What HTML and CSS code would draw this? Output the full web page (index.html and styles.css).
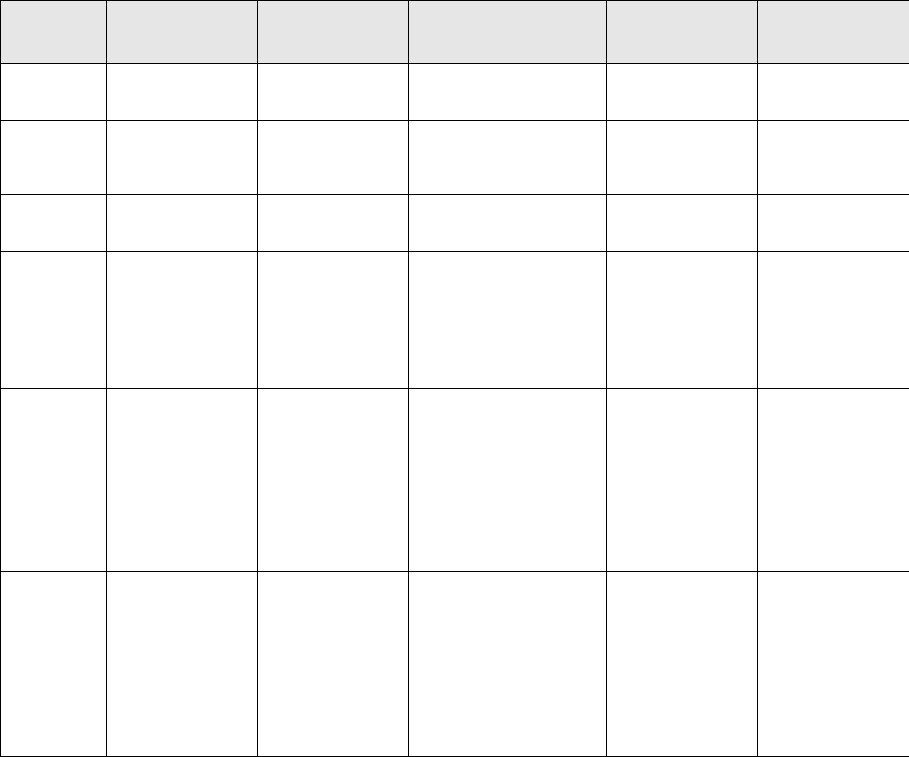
FILE: index.html
```html
<!DOCTYPE html>
<html lang="en">
<head>
<meta charset="utf-8">
<title>Table</title>
<link rel="stylesheet" href="styles.css">
</head>
<body>
<table class="grid">
  <colgroup>
    <col class="c1"><col class="c2"><col class="c3"><col class="c4"><col class="c5"><col class="c6">
  </colgroup>
  <thead>
    <tr class="r0"><th></th><th></th><th></th><th></th><th></th><th></th></tr>
  </thead>
  <tbody>
    <tr class="r1"><td></td><td></td><td></td><td></td><td></td><td></td></tr>
    <tr class="r2"><td></td><td></td><td></td><td></td><td></td><td></td></tr>
    <tr class="r3"><td></td><td></td><td></td><td></td><td></td><td></td></tr>
    <tr class="r4"><td></td><td></td><td></td><td></td><td></td><td></td></tr>
    <tr class="r5"><td></td><td></td><td></td><td></td><td></td><td></td></tr>
    <tr class="r6"><td></td><td></td><td></td><td></td><td></td><td></td></tr>
  </tbody>
</table>
</body>
</html>
```
FILE: styles.css
```css
html, body {
  margin: 0;
  padding: 0;
  background: #ffffff;
  font-family: "Liberation Sans", Arial, sans-serif;
}
.grid {
  border-collapse: collapse;
  table-layout: fixed;
  width: 909px;
}
.grid th,
.grid td {
  border: 1px solid #000000;
  padding: 0;
}
.grid th {
  background: #e6e6e6;
}
.c1 { width: 106px; }
.c2 { width: 151px; }
.c3 { width: 151px; }
.c4 { width: 198px; }
.c5 { width: 151px; }
.c6 { width: 152px; }
.r0 { height: 63px; }
.r1 { height: 57px; }
.r2 { height: 74px; }
.r3 { height: 57px; }
.r4 { height: 137px; }
.r5 { height: 183px; }
.r6 { height: 185px; }
```
